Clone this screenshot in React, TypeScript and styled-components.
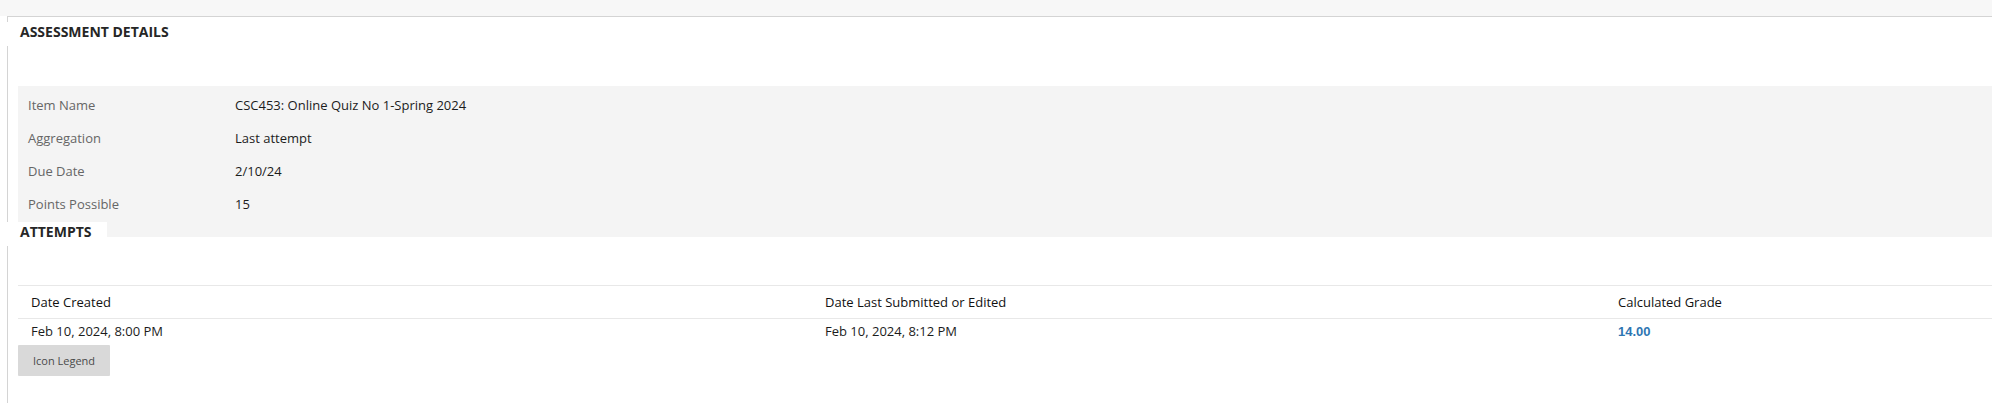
import React from "react";
import styled, { createGlobalStyle } from "styled-components";

const Global = createGlobalStyle`
  html, body { margin: 0; padding: 0; background: #ffffff; }
  body { font-family: "Open Sans", "Liberation Sans", sans-serif; overflow: hidden; }
`;

const Page = styled.div`
  display: flex;
  flex-direction: column;
  min-height: 100vh;
`;

const TopStrip = styled.div`
  height: 16px;
  background: #f7f7f7;
`;

const Body = styled.div`
  flex: 1;
  display: flex;
  padding-left: 7px;
`;

const Panel = styled.section`
  flex: 1;
  background: #ffffff;
  border-top: 1px solid #d4d4d4;
  border-left: 1px solid #d4d4d4;
  padding-bottom: 30px;
`;

const StepTitle = styled.h2<{ $top: number; $width?: number }>`
  margin: ${(p) => p.$top}px 0 0 -4px;
  width: ${(p) => (p.$width ? `${p.$width}px` : "auto")};
  padding: 1px 0 5px 16px;
  box-sizing: border-box;
  background: #ffffff;
  font-size: 14px;
  line-height: 18px;
  font-weight: 700;
  color: #262626;
  text-transform: uppercase;
`;

const DetailsBox = styled.dl`
  margin: 40px 0 0 10px;
  padding: 2px 0 17px 10px;
  background: #f4f4f4;
  display: grid;
  grid-template-columns: 207px 1fr;
  grid-auto-rows: 33px;
  align-items: center;
  font-size: 13px;
  line-height: 18px;
`;

const Label = styled.dt`
  margin: 0;
  color: #666666;
`;

const Value = styled.dd`
  margin: 0;
  color: #1c1c1c;
`;

const Table = styled.div`
  margin: 39px 0 0 10px;
  border-top: 1px solid #e8e8e8;
  font-size: 13px;
  line-height: 18px;
`;

const Row = styled.div<{ $height: number; $divider?: boolean }>`
  display: grid;
  grid-template-columns: 794px 793px 1fr;
  align-items: center;
  height: ${(p) => p.$height}px;
  border-bottom: ${(p) => (p.$divider ? "1px solid #e8e8e8" : "none")};
`;

const Cell = styled.div<{ $head?: boolean }>`
  padding-left: 13px;
  color: ${(p) => (p.$head ? "#111111" : "#1c1c1c")};
`;

const Grade = styled.span`
  font-family: "Liberation Sans", Arial, sans-serif;
  font-weight: 700;
  font-size: 13px;
  color: #2e76b2;
`;

const LegendButton = styled.button`
  display: block;
  margin: 2px 0 0 10px;
  width: 92px;
  height: 31px;
  padding: 0;
  border: none;
  border-radius: 1px;
  background: #d9d9d9;
  font-family: "Open Sans", "Liberation Sans", sans-serif;
  font-size: 11px;
  color: #4a4a4a;
  text-align: center;
`;

const details = [
  ["Item Name", "CSC453: Online Quiz No 1-Spring 2024"],
  ["Aggregation", "Last attempt"],
  ["Due Date", "2/10/24"],
  ["Points Possible", "15"],
];

export default function App() {
  return (
    <Page>
      <Global />
      <TopStrip />
      <Body>
        <Panel>
          <StepTitle $top={5}>Assessment Details</StepTitle>
          <DetailsBox>
            {details.map(([k, v]) => (
              <React.Fragment key={k}>
                <Label>{k}</Label>
                <Value>{v}</Value>
              </React.Fragment>
            ))}
          </DetailsBox>
          <StepTitle $top={-15} $width={103}>Attempts</StepTitle>
          <Table>
            <Row $height={32} $divider>
              <Cell $head>Date Created</Cell>
              <Cell $head>Date Last Submitted or Edited</Cell>
              <Cell $head>Calculated Grade</Cell>
            </Row>
            <Row $height={24}>
              <Cell>Feb 10, 2024, 8:00 PM</Cell>
              <Cell>Feb 10, 2024, 8:12 PM</Cell>
              <Cell>
                <Grade>14.00</Grade>
              </Cell>
            </Row>
          </Table>
          <LegendButton>Icon Legend</LegendButton>
        </Panel>
      </Body>
    </Page>
  );
}
